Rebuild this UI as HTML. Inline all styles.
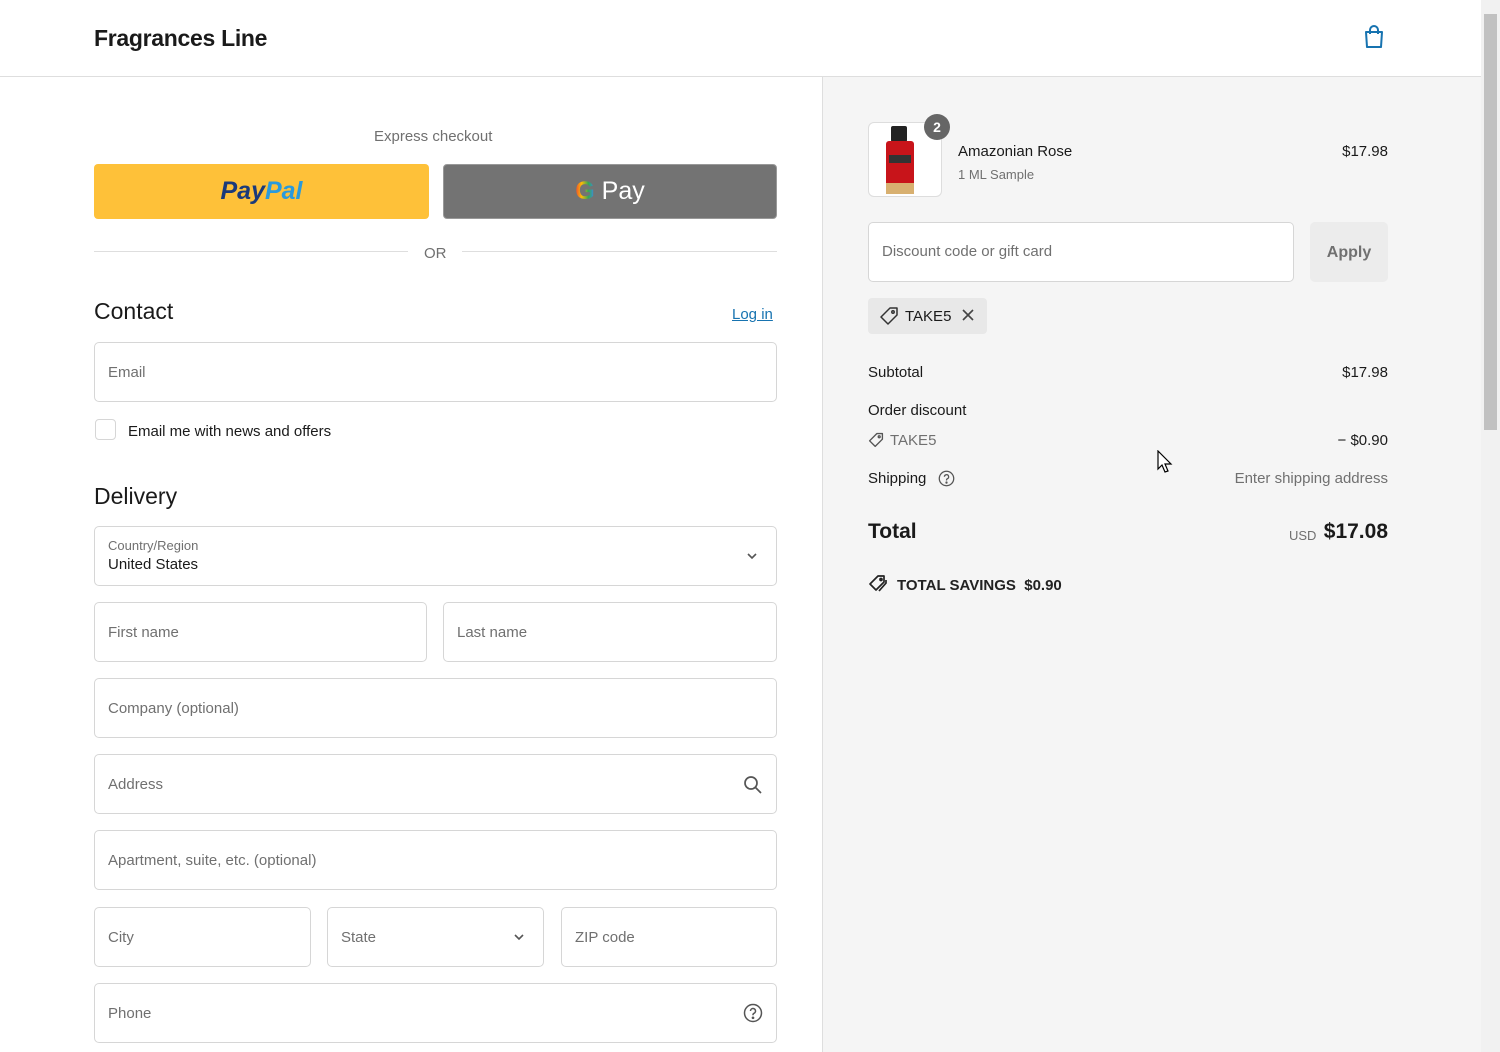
<!DOCTYPE html>
<html><head><meta charset="utf-8"><style>
*{box-sizing:border-box;margin:0;padding:0}
body{width:1500px;height:1052px;overflow:hidden;background:#fff;font-family:"Liberation Sans",sans-serif;color:#1a1a1a;position:relative;font-size:15px}
.a{position:absolute}
.r{position:absolute;right:112px;text-align:right}
.hdr{left:0;top:0;width:1481px;height:77px;border-bottom:1px solid #dedede;background:#fff}
.right{left:822px;top:77px;width:659px;height:975px;background:#f5f5f5;border-left:1px solid #dedede}
.sb{left:1481px;top:0;width:19px;height:1052px;background:#f1f1f1}
.inp{position:absolute;border:1px solid #d6d6d6;border-radius:5px;background:#fff;height:60px;color:#707070;font-size:15px;padding-left:13px;line-height:60px}
.gray{color:#707070}
</style></head><body>
<div class="a hdr"></div>
<div class="a" style="left:94px;top:25px;font-size:23px;color:#1a1a1a;font-weight:bold;letter-spacing:-0.3px">Fragrances Line</div>
<svg class="a" style="left:1362px;top:24px" width="24" height="26" viewBox="0 0 24 26" fill="none" stroke="#1773b0" stroke-width="2"><path d="M4 8h16l-1 15H5z" stroke-linejoin="round"/><path d="M8 10V6a4 4 0 0 1 8 0v4"/></svg>
<div class="a right"></div>
<div class="a sb"><div class="a" style="left:3px;top:14px;width:13px;height:416px;background:#c1c1c1"></div></div>

<div class="a gray" style="left:374px;top:128px;font-size:15px">Express checkout</div>
<div class="a" style="left:94px;top:164px;width:335px;height:55px;background:#fec139;border-radius:4px;text-align:center;line-height:55px;font-size:25px;font-weight:bold;font-style:italic"><span style="color:#1b3a7a">Pay</span><span style="color:#2a9adc">Pal</span></div>
<div class="a" style="left:443px;top:164px;width:334px;height:55px;background:#737373;border:1px solid #999;border-radius:4px;text-align:center;line-height:53px;font-size:25px;color:#fff"><span style="font-weight:bold;background:linear-gradient(90deg,#ea4335,#fbbc05,#34a853,#4285f4);-webkit-background-clip:text;background-clip:text;color:transparent">G</span> Pay</div>
<div class="a" style="left:94px;top:251px;width:314px;height:1px;background:#dedede"></div>
<div class="a" style="left:462px;top:251px;width:315px;height:1px;background:#dedede"></div>
<div class="a gray" style="left:424px;top:245px">OR</div>

<div class="a" style="left:94px;top:298px;font-size:23px">Contact</div>
<div class="a" style="left:732px;top:306px;color:#1773b0;text-decoration:underline">Log in</div>
<div class="inp" style="left:94px;top:342px;width:683px">Email</div>
<div class="a" style="left:95px;top:419px;width:21px;height:21px;border:1px solid #d6d6d6;border-radius:4px;background:#fff"></div>
<div class="a" style="left:128px;top:423px">Email me with news and offers</div>

<div class="a" style="left:94px;top:483px;font-size:23px">Delivery</div>
<div class="inp" style="left:94px;top:526px;width:683px;line-height:normal;color:#1a1a1a"><div style="font-size:13px;color:#707070;margin-top:11px">Country/Region</div><div style="margin-top:3px">United States</div></div>
<svg class="a" style="left:746px;top:552px" width="12" height="8" viewBox="0 0 12 8" fill="none" stroke="#555" stroke-width="1.6"><path d="M2 2l4 4 4-4"/></svg>
<div class="inp" style="left:94px;top:602px;width:333px">First name</div>
<div class="inp" style="left:443px;top:602px;width:334px">Last name</div>
<div class="inp" style="left:94px;top:678px;width:683px">Company (optional)</div>
<div class="inp" style="left:94px;top:754px;width:683px">Address</div>
<svg class="a" style="left:743px;top:775px" width="20" height="20" viewBox="0 0 20 20" fill="none" stroke="#555" stroke-width="1.7"><circle cx="8" cy="8" r="6"/><path d="M12.5 12.5L18 18"/></svg>
<div class="inp" style="left:94px;top:830px;width:683px">Apartment, suite, etc. (optional)</div>
<div class="inp" style="left:94px;top:907px;width:217px">City</div>
<div class="inp" style="left:327px;top:907px;width:217px">State</div>
<svg class="a" style="left:513px;top:933px" width="12" height="8" viewBox="0 0 12 8" fill="none" stroke="#555" stroke-width="1.6"><path d="M2 2l4 4 4-4"/></svg>
<div class="inp" style="left:561px;top:907px;width:216px">ZIP code</div>
<div class="inp" style="left:94px;top:983px;width:683px">Phone</div>
<svg class="a" style="left:743px;top:1003px" width="20" height="20" viewBox="0 0 20 20" fill="none" stroke="#555" stroke-width="1.5"><circle cx="10" cy="10" r="8.5"/><path d="M7.5 8a2.5 2.5 0 1 1 3.5 2.3c-.7.3-1 .8-1 1.5v.5"/><circle cx="10" cy="14.8" r=".6" fill="#555"/></svg>

<!-- right -->
<div class="a" style="left:868px;top:122px;width:74px;height:75px;background:#fff;border:1px solid #ddd;border-radius:6px;overflow:hidden">
<div class="a" style="left:22px;top:3px;width:16px;height:16px;background:#222;border-radius:2px"></div>
<div class="a" style="left:17px;top:18px;width:28px;height:45px;background:#c8141a;border-radius:3px"></div>
<div class="a" style="left:20px;top:32px;width:22px;height:8px;background:#333"></div>
<div class="a" style="left:17px;top:60px;width:28px;height:11px;background:#d8b070"></div>
</div>
<div class="a" style="left:924px;top:114px;width:26px;height:26px;border-radius:13px;background:#666;color:#fff;font-size:14px;font-weight:bold;text-align:center;line-height:26px">2</div>
<div class="a" style="left:958px;top:143px">Amazonian Rose</div>
<div class="a gray" style="left:958px;top:167px;font-size:13px">1 ML Sample</div>
<div class="r" style="top:143px">$17.98</div>
<div class="inp" style="left:868px;top:222px;width:426px;height:60px;line-height:58px">Discount code or gift card</div>
<div class="a" style="left:1310px;top:222px;width:78px;height:60px;background:#ececec;border-radius:5px;text-align:center;line-height:61px;font-weight:bold;color:#707070;font-size:16px">Apply</div>
<div class="a" style="left:868px;top:298px;width:119px;height:36px;background:#e8e8e8;border-radius:4px"></div>
<svg class="a" style="left:879px;top:306px" width="20" height="20" viewBox="0 0 20 20" fill="none" stroke="#333" stroke-width="1.5"><path d="M11 2h7v7l-9 9-7-7z" stroke-linejoin="round"/><circle cx="14" cy="6" r="1.2"/></svg>
<div class="a" style="left:905px;top:308px">TAKE5</div>
<svg class="a" style="left:961px;top:308px" width="14" height="14" viewBox="0 0 14 14" stroke="#444" stroke-width="1.6"><path d="M2 2l10 10M12 2L2 12"/></svg>

<div class="a" style="left:868px;top:364px">Subtotal</div>
<div class="r" style="top:364px">$17.98</div>
<div class="a" style="left:868px;top:402px">Order discount</div>
<svg class="a" style="left:868px;top:432px" width="16" height="16" viewBox="0 0 20 20" fill="none" stroke="#555" stroke-width="1.7"><path d="M11 2h7v7l-9 9-7-7z" stroke-linejoin="round"/><circle cx="14" cy="6" r="1.2"/></svg>
<div class="a gray" style="left:890px;top:432px">TAKE5</div>
<div class="r" style="top:432px">− $0.90</div>
<div class="a" style="left:868px;top:470px">Shipping</div>
<svg class="a" style="left:938px;top:470px" width="17" height="17" viewBox="0 0 20 20" fill="none" stroke="#555" stroke-width="1.5"><circle cx="10" cy="10" r="8.5"/><path d="M7.5 8a2.5 2.5 0 1 1 3.5 2.3c-.7.3-1 .8-1 1.5v.5"/><circle cx="10" cy="14.8" r=".6" fill="#555"/></svg>
<div class="r gray" style="top:470px">Enter shipping address</div>
<div class="a" style="left:868px;top:520px;font-size:21px;font-weight:bold">Total</div>
<div class="a gray" style="left:1289px;top:528px;font-size:13px">USD</div>
<div class="r" style="top:520px;font-size:21px;font-weight:bold">$17.08</div>
<svg class="a" style="left:868px;top:575px" width="20" height="18" viewBox="0 0 20 18" fill="none" stroke="#222" stroke-width="1.7"><path d="M10 1h6v6l-8 8-6-6z" stroke-linejoin="round"/><path d="M18 5v3l-7 8"/><circle cx="13" cy="4.5" r="1"/></svg>
<div class="a" style="left:897px;top:577px;font-weight:bold;font-size:15px;color:#222">TOTAL SAVINGS&nbsp; $0.90</div>
<svg class="a" style="left:1157px;top:450px" width="16" height="24" viewBox="0 0 16 24"><path d="M1 1v18l4-4 3 7 3-1-3-7h6z" fill="#fff" stroke="#000" stroke-width="1.2"/></svg>
</body></html>
